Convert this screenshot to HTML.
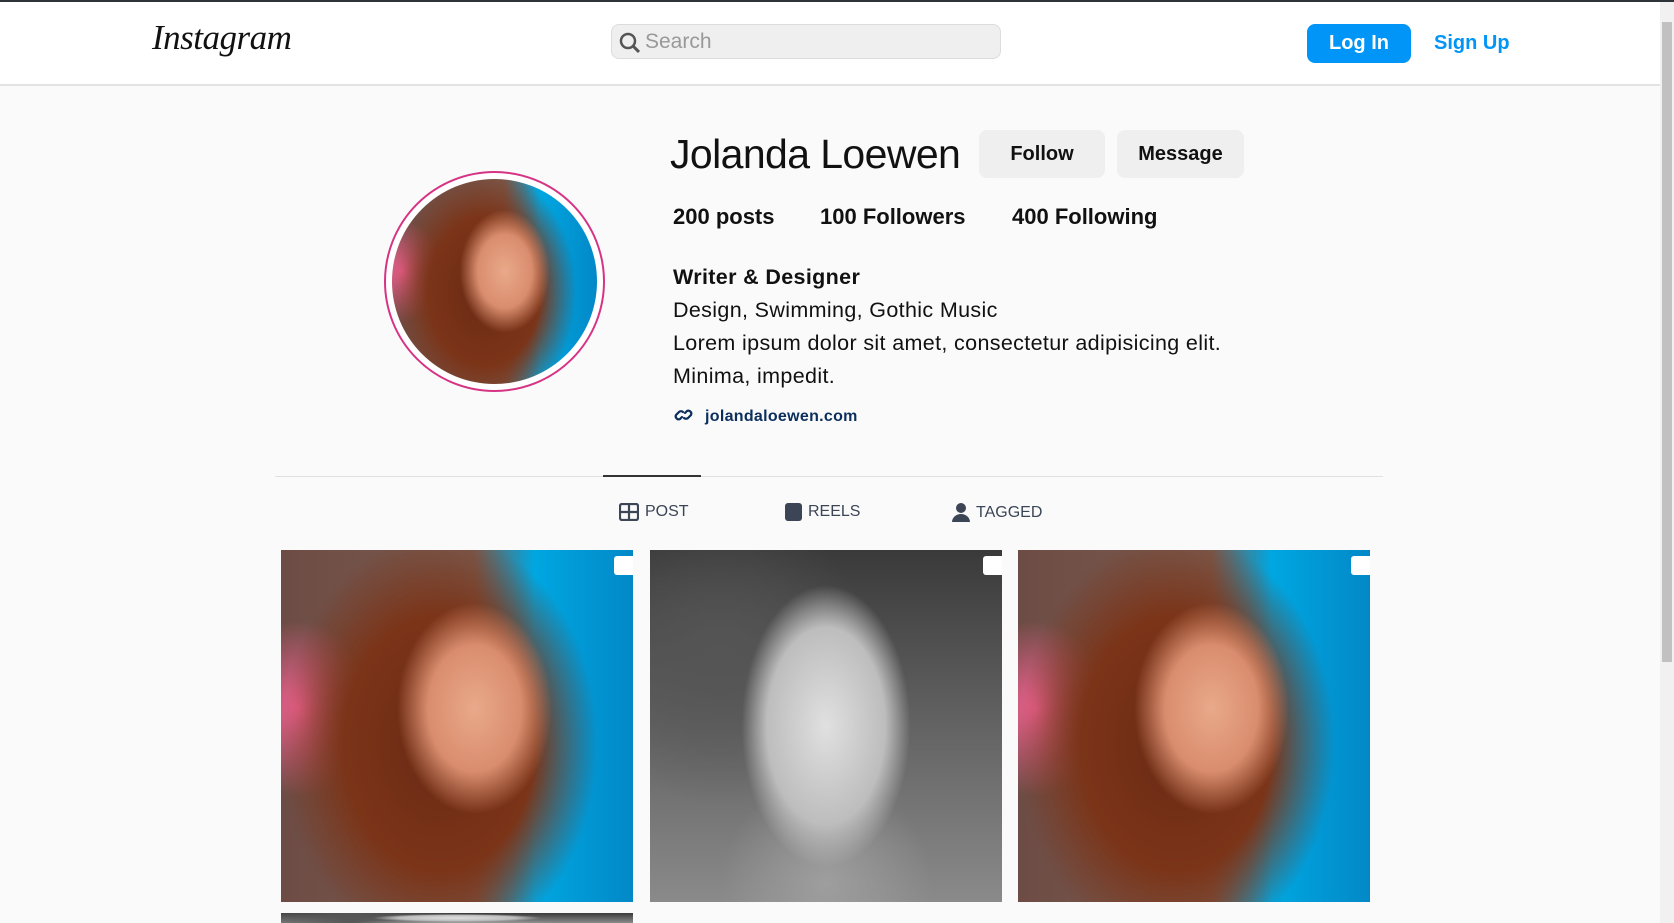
<!DOCTYPE html>
<html><head><meta charset="utf-8"><style>
*{box-sizing:border-box;margin:0;padding:0}
html,body{width:1674px;height:923px;overflow:hidden;background:#fafafa;font-family:"Liberation Sans",sans-serif;color:#111}
.topbar{position:absolute;left:0;top:0;width:1674px;height:2px;background:#2d3338}
.header{position:absolute;left:0;top:2px;width:1660px;height:84px;background:#fff;border-bottom:2px solid #e3e3e3}
.logo{position:absolute;left:152px;top:16px;font-family:"Liberation Serif",serif;font-style:italic;font-size:35px;color:#111;letter-spacing:-0.5px}
.search{position:absolute;left:611px;top:22px;width:390px;height:35px;background:#efefef;border:1px solid #dcdcdc;border-radius:8px}
.search span{position:absolute;left:33px;top:5px;font-size:21px;color:#999}
.btn-login{position:absolute;left:1307px;top:22px;width:104px;height:39px;background:#0095f6;border-radius:8px;color:#fff;font-weight:bold;font-size:20px;text-align:center;line-height:39px}
.signup{position:absolute;left:1434px;top:30px;font-weight:bold;font-size:20px;color:#0095f6}
.scroll{position:absolute;left:1660px;top:2px;width:14px;height:921px;background:#f1f1f1}
.thumb{position:absolute;left:1662px;top:22px;width:10px;height:640px;background:#c1c1c1}
.avatar{position:absolute;left:384px;top:171px;width:221px;height:221px;border-radius:50%;border:2px solid #d63384;background:#fff;padding:6px}
.avatar .img{width:100%;height:100%;border-radius:50%}
.woman{background:
 radial-gradient(ellipse 22% 30% at 55% 45%,#e9a98a 0,#d98d6e 60%,transparent 100%),
 radial-gradient(ellipse 45% 60% at 45% 55%,#6a2a14 0,#7b3418 60%,transparent 100%),
 radial-gradient(ellipse 20% 25% at 5% 45%,#f06292 0,transparent 100%),
 linear-gradient(90deg,#6d4c45 0,#7a5a4e 55%,#00a7e1 72%,#0288c7 100%)}
.man{background:
 radial-gradient(ellipse 24% 40% at 50% 50%,#e0e0e0 0,#bdbdbd 70%,transparent 100%),
 radial-gradient(ellipse 30% 30% at 50% 95%,#9e9e9e 0,transparent 100%),
 radial-gradient(circle at 20% 30%,#555 0,transparent 40%),
 linear-gradient(180deg,#3a3a3a,#6b6b6b 60%,#8a8a8a)}
.name{position:absolute;left:670px;top:131px;font-size:41px;color:#111;letter-spacing:-0.6px}
.gbtn{position:absolute;top:130px;height:48px;background:#efefef;border-radius:8px;font-weight:bold;font-size:20px;text-align:center;line-height:48px}
.stat{position:absolute;top:204px;font-size:22px;font-weight:bold}
.bio{position:absolute;left:673px;font-size:21.5px;letter-spacing:0.35px}
.link{position:absolute;left:673px;top:406px;font-size:16px;font-weight:bold;color:#0b2e5c;letter-spacing:0.3px}
.sep{position:absolute;left:275px;top:476px;width:1108px;height:1px;background:#e0e0e0}
.active{position:absolute;left:603px;top:475px;width:98px;height:2px;background:#333}
.tab{position:absolute;top:503px;font-size:16px;color:#3b4556;display:flex;align-items:center;gap:6px}
.post{position:absolute;width:352px;height:352px;overflow:hidden}
.sq{position:absolute;right:0;top:6px;width:19px;height:19px;background:#fff;border-radius:3px 0 0 3px}
</style></head><body>
<div class="topbar"></div>
<div class="header">
 <div class="logo">Instagram</div>
 <div class="search"><svg style="position:absolute;left:7px;top:7px" width="22" height="22" viewBox="0 0 22 22"><circle cx="9" cy="9" r="7" fill="none" stroke="#555" stroke-width="2.5"/><line x1="14" y1="14" x2="20" y2="20" stroke="#555" stroke-width="3"/></svg><span>Search</span></div>
 <div class="btn-login">Log In</div>
 <div class="signup">Sign Up</div>
</div>
<div class="scroll"></div><div class="thumb"></div>
<div class="avatar"><div class="img woman"></div></div>
<div class="name">Jolanda Loewen</div>
<div class="gbtn" style="left:979px;width:126px">Follow</div>
<div class="gbtn" style="left:1117px;width:127px">Message</div>
<div class="stat" style="left:673px">200 posts</div>
<div class="stat" style="left:820px">100 Followers</div>
<div class="stat" style="left:1012px">400 Following</div>
<div class="bio" style="top:265px;font-weight:bold">Writer &amp; Designer</div>
<div class="bio" style="top:298px">Design, Swimming, Gothic Music</div>
<div class="bio" style="top:331px">Lorem ipsum dolor sit amet, consectetur adipisicing elit.</div>
<div class="bio" style="top:364px">Minima, impedit.</div>
<div class="link"><svg style="vertical-align:-3px;margin-right:10px" width="22" height="18" viewBox="0 0 22 18"><g fill="none" stroke="#0b2e5c" stroke-width="2.2" stroke-linecap="round"><path d="M9 11l-2 2a3 3 0 0 1-4-4l3-3a3 3 0 0 1 4 0"/><path d="M12 7l2-2a3 3 0 0 1 4 4l-3 3a3 3 0 0 1-4 0"/></g></svg>jolandaloewen.com</div>
<div class="sep"></div><div class="active"></div>
<div class="tab" style="left:619px"><svg width="20" height="18" viewBox="0 0 20 18"><rect x="1" y="1" width="18" height="16" rx="2" fill="none" stroke="#3b4556" stroke-width="2.2"/><line x1="10" y1="1" x2="10" y2="17" stroke="#3b4556" stroke-width="2.2"/><line x1="1" y1="9" x2="19" y2="9" stroke="#3b4556" stroke-width="2.2"/></svg>POST</div>
<div class="tab" style="left:785px"><svg width="17" height="18" viewBox="0 0 17 18"><rect x="0" y="0" width="17" height="18" rx="3" fill="#3b4556"/></svg>REELS</div>
<div class="tab" style="left:952px"><svg width="18" height="19" viewBox="0 0 18 19"><circle cx="9" cy="5" r="5" fill="#3b4556"/><path d="M0 19a9 8 0 0 1 18 0z" fill="#3b4556"/></svg>TAGGED</div>
<div class="post woman" style="left:281px;top:550px"><div class="sq"></div></div>
<div class="post man" style="left:650px;top:550px"><div class="sq"></div></div>
<div class="post woman" style="left:1018px;top:550px"><div class="sq"></div></div>
<div class="post man" style="left:281px;top:913px;height:10px"></div>
</body></html>
